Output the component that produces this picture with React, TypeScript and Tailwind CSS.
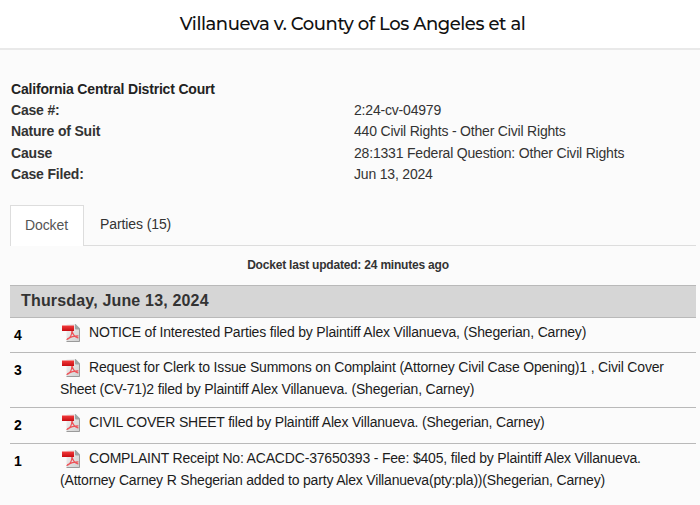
import { ReactNode } from "react";

const details = [
  { label: "Case #:", value: "2:24-cv-04979" },
  { label: "Nature of Suit", value: "440 Civil Rights - Other Civil Rights" },
  { label: "Cause", value: "28:1331 Federal Question: Other Civil Rights" },
  { label: "Case Filed:", value: "Jun 13, 2024" },
];

function PdfIcon() {
  return (
    <svg className="inline-block w-[20px] h-[20px] ml-[1px] mr-2 align-[-6px]" viewBox="0 0 20 20" fill="none">
      <defs>
        <linearGradient id="page" x1="0" y1="0" x2="1" y2="1">
          <stop offset="0" stopColor="#f4f4f4" />
          <stop offset="1" stopColor="#cecece" />
        </linearGradient>
        <linearGradient id="banner" x1="0" y1="0" x2="0" y2="1">
          <stop offset="0" stopColor="#f23c3c" />
          <stop offset="1" stopColor="#c80c12" />
        </linearGradient>
      </defs>
      <path d="M6 1h8.500l4.500 4.500v12a1.500 1.500 0 0 1-1.500 1.500H7a1.500 1.500 0 0 1-1.500-1.500V1.500z" fill="url(#page)" />
      <path d="M5.500 18.500H18.500V6" stroke="#9a9a9a" strokeWidth="1" />
      <path d="M14 1v4.500a1 1 0 0 0 1 1h4v-1L14.500 1z" fill="#9fa6a6" />
      <path d="M6 16.500c2.500-1 4.800-4.500 5-9M11 8c.8 3.500 2.500 5.800 6 6.800M6.500 15.800c3-2 6.500-3 10.500-3" stroke="#ee5359" strokeWidth="1.200" strokeLinecap="round" />
      <path d="M1 2.500h12V8H1z" fill="url(#banner)" />
    </svg>
  );
}

// One filing row: entry number on the left, document text on the right
function Entry({ number, className, children }: { number: number; className: string; children: ReactNode }) {
  return (
    <li className={`flex border-b ${className}`}>
      <span className="w-[50px] shrink-0 pl-1 pt-[3px] font-bold text-black">{number}</span>
      <p className="whitespace-nowrap">
        <PdfIcon />
        {children}
      </p>
    </li>
  );
}

export default function App() {
  return (
    <div className="h-[505px] overflow-hidden bg-[#fbfbfb] text-[#333] font-['Liberation_Sans',Arial,sans-serif]">
      {/* Case title */}
      <header className="h-[50px] bg-white border-b-2 border-[#e9e9e9] flex justify-center pl-[5px]">
        <h1 className="font-[Montserrat,Inter,sans-serif] font-medium text-[18px] tracking-[-0.44px] leading-[48px] text-[#111] whitespace-nowrap">
          Villanueva v. County of Los Angeles et al
        </h1>
      </header>

      <main className="pl-[10px] pr-1">
        {/* Case details */}
        <section className="pt-[28.5px] pl-[1px] text-[14px] tracking-[-0.19px] leading-[21.4px]">
          <h2 className="font-bold text-[#222]">California Central District Court</h2>
          <dl>
            {details.map((item) => (
              <div key={item.label} className="flex">
                <dt className="w-[343px] font-bold">{item.label}</dt>
                <dd>{item.value}</dd>
              </div>
            ))}
          </dl>
        </section>

        {/* Tabs */}
        <nav className="mt-[19.5px] h-[41px] flex border-b border-[#ddd] text-[14px] tracking-[-0.1px] leading-[37px]">
          <button className="w-[74px] h-[41px] pb-[2px] pr-[1px] bg-white border border-b-0 border-[#ddd] text-[#555]">
            Docket
          </button>
          <button className="px-[16px] h-[39px]">Parties (15)</button>
        </nav>

        <p className="h-[39px] pt-[9px] pr-[10px] text-center font-bold text-[12px] tracking-[-0.2px] leading-5">
          Docket last updated: 24 minutes ago
        </p>

        {/* Docket entries */}
        <h3 className="h-[33px] px-[11px] bg-[#d6d6d6] border-y border-[#b9b9b9] font-bold text-[16px] tracking-[0.17px] leading-[30px]">
          Thursday, June 13, 2024
        </h3>
        <ul className="text-[14px] tracking-[-0.18px] leading-[22px] text-[#1c1c1c]">
          <Entry number={4} className="h-[35px] pt-[3px] border-[#b9b9b9]">
            NOTICE of Interested Parties filed by Plaintiff Alex Villanueva, (Shegerian, Carney)
          </Entry>
          <Entry number={3} className="h-[55px] pt-[3px] border-[#b9b9b9]">
            Request for Clerk to Issue Summons on Complaint (Attorney Civil Case Opening)1 , Civil Cover
            <br />
            Sheet (CV-71)2 filed by Plaintiff Alex Villanueva. (Shegerian, Carney)
          </Entry>
          <Entry number={2} className="h-[36px] pt-[3px] border-[#b9b9b9]">
            CIVIL COVER SHEET filed by Plaintiff Alex Villanueva. (Shegerian, Carney)
          </Entry>
          <Entry number={1} className="pt-[3px] border-transparent">
            COMPLAINT Receipt No: ACACDC-37650393 - Fee: $405, filed by Plaintiff Alex Villanueva.
            <br />
            (Attorney Carney R Shegerian added to party Alex Villanueva(pty:pla))(Shegerian, Carney)
          </Entry>
        </ul>
      </main>
    </div>
  );
}
